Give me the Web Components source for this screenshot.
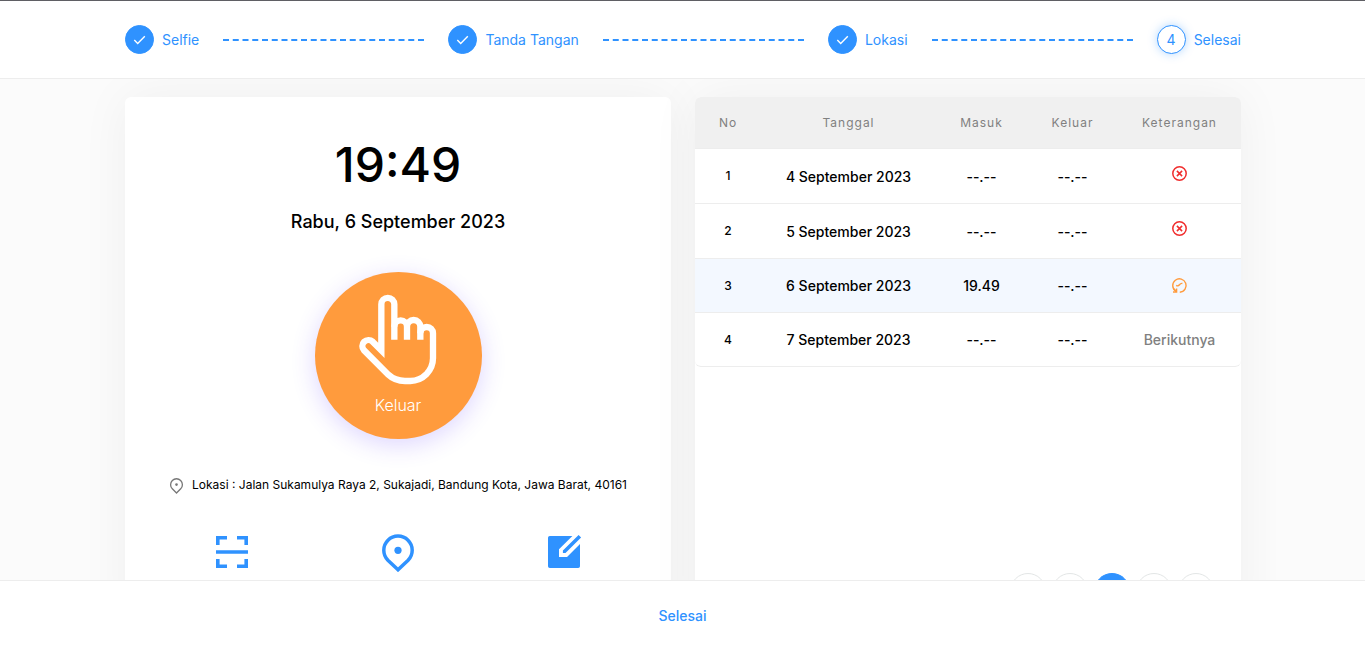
<!DOCTYPE html>
<html lang="id">
<head>
<meta charset="utf-8">
<meta name="viewport" content="width=device-width, initial-scale=1">
<title>Presensi</title>
<style>
  :root {
    --blue: #2f92ff;
    --orange: #ff9b3d;
    --red: #f02d2d;
    --grey: #808080;
    --line: #ededed;
  }
  body { margin: 0; font-family: Inter, "Liberation Sans", sans-serif; font-size: 14px; color: #000; }
</style>
</head>
<body>
<presence-app>
  <step-bar slot="header">
    <step-item done>Selfie</step-item>
    <step-line></step-line>
    <step-item done>Tanda Tangan</step-item>
    <step-line></step-line>
    <step-item done>Lokasi</step-item>
    <step-line></step-line>
    <step-item number="4">Selesai</step-item>
  </step-bar>
  <panel-card>
    <clock-panel>
      <span slot="time">19:49</span>
      <span slot="date">Rabu, 6 September 2023</span>
      <span slot="action">Keluar</span>
      <span slot="place">Lokasi : Jalan Sukamulya Raya 2, Sukajadi, Bandung Kota, Jawa Barat, 40161</span>
    </clock-panel>
  </panel-card>
  <panel-card>
    <history-table></history-table>
    <page-dots count="5" current="3"></page-dots>
  </panel-card>
  <finish-button slot="footer">Selesai</finish-button>
</presence-app>

<script>
  const define = (name, html, setup) => {
    const template = document.createElement('template');
    template.innerHTML = html;
    customElements.define(name, class extends HTMLElement {
      constructor() {
        super();
        this.attachShadow({ mode: 'open' }).append(template.content.cloneNode(true));
      }
      connectedCallback() {
        if (setup) setup(this, this.shadowRoot);
      }
    });
  };

  /* Page frame: fixed bars above and below a scrolling content area */
  define('presence-app', `
    <style>
      :host { display: flex; flex-direction: column; height: 100vh; background: #fbfbfb; }
      header { flex: none; background: #fff; border-top: 1px solid #5f5f64; border-bottom: 1px solid var(--line); }
      main { flex: 1; min-height: 0; overflow-y: auto; scrollbar-width: none; }
      .grid { display: grid; grid-template-columns: 1fr 1fr; gap: 24px; max-width: 1116px; margin: 0 auto; padding: 18px 0 40px 1px; }
      footer { flex: none; background: #fff; border-top: 1px solid var(--line); }
      @media (max-width: 1000px) { .grid { grid-template-columns: 1fr; margin: 0 16px; } }
    </style>
    <header><slot name="header"></slot></header>
    <main><div class="grid"><slot></slot></div></main>
    <footer><slot name="footer"></slot></footer>`);

  define('step-bar', `
    <style>
      :host { display: flex; align-items: center; gap: 24px; max-width: 1116px; margin: 0 auto; padding: 24px 0 24px 1px; color: var(--blue); }
    </style>
    <slot></slot>`);

  define('step-item', `
    <style>
      :host { display: flex; align-items: center; gap: 8px; flex: none; line-height: 20px; }
      .dot { box-sizing: border-box; display: grid; place-items: center; width: 29px; height: 29px; border-radius: 50%; border: 1px solid var(--blue); background: #fff; box-shadow: 0 0 10px rgba(47,146,255,.35); }
      :host([done]) .dot { background: var(--blue); box-shadow: none; }
      svg { display: none; width: 13px; height: 13px; }
      :host([done]) svg { display: block; }
    </style>
    <span class="dot"><svg viewBox="0 0 13 13" fill="none" stroke="#fff" stroke-width="1.4" aria-hidden="true"><path d="M1.3 7 4.7 10.4 11.8 3.3"/></svg></span>
    <span><slot></slot></span>`,
    (el, root) => {
      const n = el.getAttribute('number');
      if (n) root.querySelector('.dot').append(n);
    });

  define('step-line', `
    <style>
      :host { display: block; flex: 1; border-top: 2px dashed var(--blue); }
    </style>`);

  define('panel-card', `
    <style>
      :host { display: flex; flex-direction: column; background: #fff; border-radius: 6px; box-shadow: 0 0 50px rgba(0,0,0,.05); }
    </style>
    <slot></slot>`);

  define('clock-panel', `
    <style>
      :host { display: flex; flex-direction: column; align-items: center; padding: 40px 24px 59px; }
      .time { font-size: 48px; line-height: 56px; font-weight: 500; }
      .date { margin-top: 15px; font-size: 18px; line-height: 28px; font-weight: 500; }
      .touch { display: flex; flex-direction: column; align-items: center; gap: 7px; box-sizing: border-box; width: 167px; height: 167px; margin: 36px 0 34px; padding: 22px 0 0; border: 0; border-radius: 50%; background: var(--orange); color: #fff; font: 300 16px/24px Inter, sans-serif; box-shadow: 0 6px 24px rgba(90,50,255,.2); }
      .touch svg { width: 79px; height: 92px; }
      .place { display: flex; align-items: center; gap: 8px; font-size: 12px; line-height: 24px; }
      .place svg { width: 15px; height: 17px; }
      .tools { display: grid; grid-template-columns: repeat(3, 1fr); width: 100%; margin-top: 35px; }
      .tools button { justify-self: center; padding: 0; border: 0; background: none; color: var(--blue); }
      .tools svg { display: block; width: 40px; height: 40px; }
    </style>
    <div class="time"><slot name="time"></slot></div>
    <div class="date"><slot name="date"></slot></div>
    <button class="touch" type="button">
      <svg viewBox="207 132 237 276" fill="none" stroke="#fff" stroke-width="19" aria-hidden="true">
        <path d="M313 269V163a19.5 19.5 0 0 0-39 0V301L248 275a18.4 18.4 0 0 0-26 26L295 374Q315 393 345 393H361Q389 393 409 373Q429 352 429 325V250a19 19 0 0 0-38 0"/>
        <path d="M313 230a19 19 0 0 1 38 0V269M351 230a20 20 0 0 1 40 0V269"/>
      </svg>
      <span><slot name="action"></slot></span>
    </button>
    <div class="place">
      <svg viewBox="0 0 15 17" fill="none" stroke="#777" stroke-width="1.3" aria-hidden="true"><path d="M7.5 16 3.3 11.8A5.9 5.9 0 1 1 11.7 11.8Z"/><circle cx="7.5" cy="7.6" r="1.3" fill="#777" stroke="none"/></svg>
      <span><slot name="place"></slot></span>
    </div>
    <div class="tools">
      <button type="button" aria-label="Pindai">
        <svg viewBox="0 0 40 40" fill="none" stroke="currentColor" stroke-width="3.6"><path d="M5.8 13V5.8H15M25 5.8H34.2V13M5.8 27V34.2H15M25 34.2H34.2V27M4 20H36"/></svg>
      </button>
      <button type="button" aria-label="Lokasi">
        <svg viewBox="0 0 40 40" fill="none" stroke="currentColor" stroke-width="3.5"><path d="M20 37.8 9.9 28.3A14.2 14.2 0 1 1 30.1 28.3Z"/><circle cx="20" cy="18.3" r="3.6" fill="currentColor" stroke="none"/></svg>
      </button>
      <button type="button" aria-label="Tanda tangan">
        <svg viewBox="0 0 40 40" fill="currentColor"><path d="M28.4 4 15 17.2V25H23L36 12V34.2A1.8 1.8 0 0 1 34.2 36H5.8A1.8 1.8 0 0 1 4 34.2V5.8A1.8 1.8 0 0 1 5.8 4ZM34.6 2.9 37.1 5.4 21.5 21H18.9V18.5Z"/></svg>
      </button>
    </div>`);

  define('history-table', `
    <style>
      :host { display: block; }
      table { width: 100%; table-layout: fixed; border-collapse: separate; border-spacing: 0; text-align: center; }
      .no { width: 66px; } .tanggal { width: 175px; } .jam { width: 91px; } .ket { width: 123px; }
      th { box-sizing: border-box; height: 52px; padding: 0; background: #f0f0f0; border-bottom: 1px solid var(--line); color: var(--grey); font-size: 12px; line-height: 20px; font-weight: 400; letter-spacing: 1px; }
      th:first-child { border-top-left-radius: 6px; }
      th:last-child { border-top-right-radius: 6px; }
      td { box-sizing: border-box; height: 54px; padding: 0; border-bottom: 1px solid var(--line); line-height: 20px; font-weight: 500; }
      .missed td { height: 55px; padding-top: 2px; }
      td:first-child, .missed td:first-child { padding-top: 0; font-size: 12px; }
      .today td { background: #f3f8ff; }
      tr:last-child td:first-child { border-bottom-left-radius: 6px; }
      tr:last-child td:last-child { border-bottom-right-radius: 6px; }
      .next { color: var(--grey); }
      svg { display: block; width: 17px; height: 17px; margin: 0 auto; }
      .missed svg { margin-bottom: 8px; }
    </style>
    <table>
      <colgroup><col class="no"><col class="tanggal"><col class="jam"><col class="jam"><col class="ket"></colgroup>
      <thead><tr><th scope="col">No</th><th scope="col">Tanggal</th><th scope="col">Masuk</th><th scope="col">Keluar</th><th scope="col">Keterangan</th></tr></thead>
      <tbody></tbody>
    </table>`,
    (el, root) => {
      const missed = '<svg viewBox="0 0 17 17" fill="none" stroke="var(--red)" stroke-width="1.5" role="img" aria-label="Tidak hadir"><circle cx="8.5" cy="8.5" r="6.7"/><path d="M5.9 5.9 11.1 11.1M11.1 5.9 5.9 11.1"/></svg>';
      const working = '<svg viewBox="0 0 17 17" fill="none" stroke="var(--orange)" stroke-width="1.4" role="img" aria-label="Sedang berlangsung"><path d="M4.6 14A6.7 6.7 0 1 1 8.8 15.2"/><path d="M2 15H5.6V11.6M2.6 11.7 5.4 14.6"/><path d="M5.2 8.4Q7.1 9.6 8.5 7.8T11.4 6.5"/></svg>';
      const rows = [
        ['missed', 1, '4 September 2023', '--.--', '--.--', missed],
        ['missed', 2, '5 September 2023', '--.--', '--.--', missed],
        ['today', 3, '6 September 2023', '19.49', '--.--', working],
        ['', 4, '7 September 2023', '--.--', '--.--', '<span class="next">Berikutnya</span>']
      ];
      root.querySelector('tbody').innerHTML = rows.map(([kind, ...cells]) =>
        `<tr class="${kind}">${cells.map(c => `<td>${c}</td>`).join('')}</tr>`).join('');
    });

  define('page-dots', `
    <style>
      :host { display: block; margin-top: auto; padding: 24px 27px 22px; }
      nav { display: flex; justify-content: flex-end; gap: 6px; }
      button { box-sizing: border-box; width: 36px; height: 36px; padding: 0; border: 1px solid #e3e6e6; border-radius: 50%; background: #fff; }
      button[aria-current] { background: var(--blue); border-color: var(--blue); }
    </style>
    <nav aria-label="Halaman"></nav>`,
    (el, root) => {
      const current = Number(el.getAttribute('current'));
      root.querySelector('nav').innerHTML = Array.from({ length: Number(el.getAttribute('count')) }, (_, i) =>
        `<button type="button" aria-label="Halaman ${i + 1}"${i + 1 === current ? ' aria-current="page"' : ''}></button>`).join('');
    });

  define('finish-button', `
    <style>
      :host { display: flex; justify-content: center; padding: 15px 0 14px; }
      button { height: 40px; padding: 0 24px; border: 0; background: none; color: var(--blue); font: 500 14px/20px Inter, sans-serif; }
    </style>
    <button type="button"><slot></slot></button>`);
</script>
</body>
</html>
